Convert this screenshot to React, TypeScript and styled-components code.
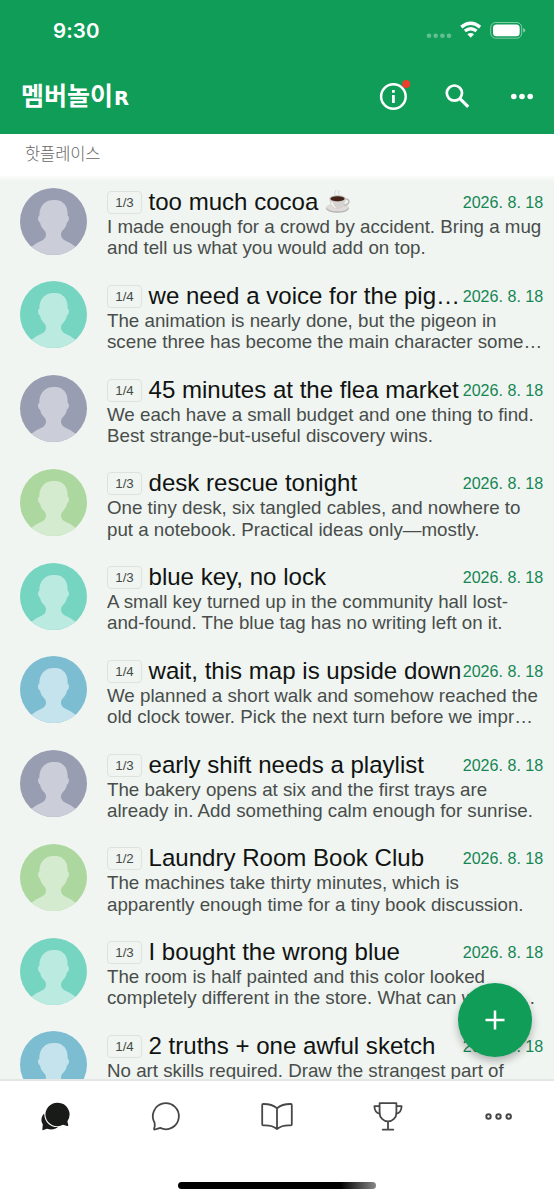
import React from "react";
import styled, { createGlobalStyle } from "styled-components";

const GlobalStyle = createGlobalStyle`
  * { box-sizing: border-box; }
  body { margin: 0; background: #fff; font-family: "Liberation Sans", "Noto Sans CJK KR", sans-serif; }
`;

const Screen = styled.div`
  position: relative;
  display: flex;
  flex-direction: column;
  width: 554px;
  height: 1200px;
  overflow: hidden;
  background: #fff;
`;

const Header = styled.header`
  flex: none;
  height: 134px;
  background: #109d58;
  color: #fff;
`;

const StatusBar = styled.div`
  display: flex;
  align-items: center;
  justify-content: space-between;
  height: 60px;
  padding: 0 28px 0 53px;
`;

const Clock = styled.span`
  padding-top: 1.5px;
  font: 600 20.5px/24px Inter, sans-serif;
  letter-spacing: 0.1px;
`;

const StatusIcons = styled.div`
  display: flex;
  align-items: center;
`;

const TitleBar = styled.div`
  display: flex;
  align-items: center;
  justify-content: space-between;
  height: 74px;
  padding: 0 20px 0 21px;
`;

const PageTitle = styled.h1`
  display: flex;
  align-items: baseline;
  margin: 0;
  padding-bottom: 6px;
  font: 700 25px/36px "Noto Sans CJK KR", sans-serif;
  letter-spacing: 0;
  white-space: nowrap;
`;

const TitleSuffix = styled.span`
  margin-left: 1px;
  font: 700 19.5px/20px "DejaVu Sans", sans-serif;
`;

const Actions = styled.div`
  display: flex;
  align-items: center;
`;

const SectionLabel = styled.div`
  flex: none;
  height: 42px;
  padding-left: 25px;
  font: 300 16.5px/39px "Noto Sans CJK KR", sans-serif;
  color: #666;
  letter-spacing: -0.1px;
`;

const List = styled.main`
  flex: 1;
  min-height: 0;
  overflow: hidden;
  padding-top: 11.5px;
  background: linear-gradient(#fbfcfb, #f0f5f2 5px);
`;

const Row = styled.article`
  display: flex;
  height: 93.75px;
  padding-left: 20px;
`;

const Avatar = styled.svg`
  flex: none;
  width: 67px;
  height: 67px;
  margin-right: 20px;
`;

const RowBody = styled.div`
  width: 437px;
  padding-top: 2.5px;
`;

const RowHead = styled.div`
  display: flex;
  align-items: center;
  height: 25px;
`;

const Count = styled.span`
  flex: none;
  width: 35px;
  height: 23px;
  margin-right: 6.5px;
  border: 1px solid #dce2de;
  border-radius: 4px;
  font-size: 13.3px;
  line-height: 22px;
  text-align: center;
  color: #444a46;
`;

const Title = styled.h2`
  display: flex;
  align-items: center;
  flex: 1;
  min-width: 0;
  margin: 0;
  padding-bottom: 2px;
  font-size: 24.07px;
  font-weight: 400;
  line-height: 25px;
  white-space: nowrap;
  color: #101311;
`;

const DateText = styled.time`
  flex: none;
  width: 81.3px;
  font-size: 16.1px;
  line-height: 25px;
  white-space: nowrap;
  color: #168653;
`;

const Message = styled.p`
  margin: 0;
  padding-top: 1px;
  font-size: 18.74px;
  line-height: 21.4px;
  white-space: pre;
  color: #484d4a;
`;

const NavBar = styled.nav`
  flex: none;
  display: grid;
  grid-template-columns: repeat(5, 1fr);
  align-items: start;
  justify-items: center;
  height: 121px;
  padding-top: 20px;
  border-top: 2px solid #e3e7e5;
  background: #fff;
`;

const AddButton = styled.button`
  position: absolute;
  left: 458px;
  top: 983px;
  display: flex;
  align-items: center;
  justify-content: center;
  width: 74px;
  height: 74px;
  padding: 0;
  border: 0;
  border-radius: 50%;
  background: #109d58;
  box-shadow: 0 4px 9px rgba(0, 0, 0, 0.28);
`;

const HomeIndicator = styled.div`
  position: absolute;
  left: 178px;
  top: 1182px;
  width: 198px;
  height: 7px;
  border-radius: 4px;
  background: linear-gradient(90deg, #000 82%, #888);
`;

const CupIcon = styled.svg`
  flex: none;
  width: 26px;
  height: 26px;
  margin-left: 7px;
`;

const palettes = {
  slate: ["#999db2", "#cbcdd9"],
  mint: ["#75d5c0", "#baeae0"],
  lime: ["#acd8a0", "#d5ebcf"],
  sky: ["#7dbdd2", "#c5e3ec"],
};

type Post = {
  tone: keyof typeof palettes;
  count: string;
  title: string;
  cup?: boolean;
  message: string;
};

const posts: Post[] = [
  { tone: "slate", count: "1/3", title: "too much cocoa", cup: true, message: "I made enough for a crowd by accident. Bring a mug\nand tell us what you would add on top." },
  { tone: "mint", count: "1/4", title: "we need a voice for the pig…", message: "The animation is nearly done, but the pigeon in\nscene three has become the main character some…" },
  { tone: "slate", count: "1/4", title: "45 minutes at the flea market", message: "We each have a small budget and one thing to find.\nBest strange-but-useful discovery wins." },
  { tone: "lime", count: "1/3", title: "desk rescue tonight", message: "One tiny desk, six tangled cables, and nowhere to\nput a notebook. Practical ideas only—mostly." },
  { tone: "mint", count: "1/3", title: "blue key, no lock", message: "A small key turned up in the community hall lost-\nand-found. The blue tag has no writing left on it." },
  { tone: "sky", count: "1/4", title: "wait, this map is upside down", message: "We planned a short walk and somehow reached the\nold clock tower. Pick the next turn before we impr…" },
  { tone: "slate", count: "1/3", title: "early shift needs a playlist", message: "The bakery opens at six and the first trays are\nalready in. Add something calm enough for sunrise." },
  { tone: "lime", count: "1/2", title: "Laundry Room Book Club", message: "The machines take thirty minutes, which is\napparently enough time for a tiny book discussion." },
  { tone: "mint", count: "1/3", title: "I bought the wrong blue", message: "The room is half painted and this color looked\ncompletely different in the store. What can we ma…" },
  { tone: "sky", count: "1/4", title: "2 truths + one awful sketch", message: "No art skills required. Draw the strangest part of" },
];

function Person({ tone, id }: { tone: Post["tone"]; id: string }) {
  const [back, front] = palettes[tone];
  return (
    <Avatar viewBox="0 0 67 67">
      <clipPath id={id}><circle cx="33.5" cy="33.5" r="33.5" /></clipPath>
      <circle cx="33.5" cy="33.5" r="33.5" fill={back} />
      <path clipPath={`url(#${id})`} fill={front} d="M33.500 12.100C25 12.100 19.200 18 19.300 28C17.300 28.400 17.700 33.500 20 34.400C20.800 38.500 22.500 40.500 25 43.200C26 44.500 26.300 47 25.600 48.800C24.500 51.500 22.500 52.300 19.500 53.700C15.500 55.500 13.500 57 11 59.500V67H56V59.500C53.500 57 51.500 55.500 47.500 53.700C44.500 52.300 42.500 51.500 41.400 48.800C40.700 47 41 44.500 42 43.200C44.500 40.500 46.200 38.500 47 34.400C49.300 33.500 49.700 28.400 47.700 28C47.700 20.500 46 16.500 42.300 14.200C40.500 12.400 37.500 12.100 33.500 12.100Z" />
    </Avatar>
  );
}

function Cup() {
  return (
    <CupIcon viewBox="0 0 26 26">
      <path d="M10.500 5.500c-3-2.500 2-2.500 0-4.500M14 5.500c-2-2 2-2.500-1-4" fill="none" stroke="#cfd3d0" strokeWidth="1" />
      <ellipse cx="12.500" cy="19.300" rx="11.500" ry="4.500" fill="#b5b1ae" />
      <ellipse cx="12.500" cy="18.300" rx="11.200" ry="4" fill="#dedbd8" />
      <path d="M19.500 10.500c5.500-1.800 6.500 5-1 6" fill="none" stroke="#c3bfbc" strokeWidth="1.700" />
      <path d="M4.500 9.500c0 6 3 10.500 8 10.500s8-4.500 8-10.500Z" fill="#d6d2cf" />
      <path d="M5.500 12.500c1 4 3 6.500 6 7-2-2-3-4-3.500-6Z" fill="#f3f1ef" />
      <ellipse cx="12.500" cy="9.500" rx="8" ry="3.200" fill="#bdb7b3" />
      <ellipse cx="12.500" cy="9.700" rx="7" ry="2.500" fill="#422117" />
    </CupIcon>
  );
}

const line = { fill: "none", stroke: "#464846", strokeWidth: 1.8, strokeLinejoin: "round", strokeLinecap: "round" } as const;

export default function App() {
  return (
    <>
      <GlobalStyle />
      <Screen>
        <Header>
          <StatusBar>
            <Clock>9:30</Clock>
            <StatusIcons>
              <svg width="100" height="24" viewBox="0 0 100 24">
                <g fill="#fff" fillOpacity=".35">
                  {[3, 9.7, 16.4, 23].map((x) => <circle key={x} cx={x} cy="17.700" r="2.300" />)}
                </g>
                <g fill="none" stroke="#fff" strokeWidth="3.400">
                  <path d="M35.300 9.100Q44.700 1.300 54.100 9.100" />
                  <path d="M38.900 13Q44.700 8.300 50.500 13" />
                </g>
                <path d="M41.400 16.300Q44.700 13.500 48 16.300L44.700 19.800Z" fill="#fff" />
                <rect x="64.700" y="4.500" width="31" height="15.700" rx="5" fill="none" stroke="#fff" strokeOpacity=".48" />
                <rect x="67" y="6.500" width="26.700" height="11.700" rx="3.500" fill="#fff" />
                <path d="M97.200 10v4.600q2-.7 2-2.300t-2-2.300Z" fill="#fff" fillOpacity=".5" />
              </svg>
            </StatusIcons>
          </StatusBar>
          <TitleBar>
            <PageTitle>멤버놀이<TitleSuffix>R</TitleSuffix></PageTitle>
            <Actions>
              <svg width="156" height="34" viewBox="0 0 156 34">
                <circle cx="15.400" cy="16.500" r="12.300" fill="none" stroke="#fff" strokeWidth="2.500" />
                <path d="M14 15h2.800v8H14ZM14 10h2.800v2.700H14Z" fill="#fff" />
                <circle cx="28.200" cy="4" r="4" fill="#ee3e2d" />
                <circle cx="76.400" cy="13.100" r="7.600" fill="none" stroke="#fff" strokeWidth="2.700" />
                <path d="M81.700 18.400L90.200 26.900" stroke="#fff" strokeWidth="3.200" />
                <g fill="#fff"><circle cx="135.800" cy="16.500" r="2.800" /><circle cx="144" cy="16.500" r="2.800" /><circle cx="152.200" cy="16.500" r="2.800" /></g>
              </svg>
            </Actions>
          </TitleBar>
        </Header>
        <SectionLabel>핫플레이스</SectionLabel>
        <List>
          {posts.map((post, i) => (
            <Row key={post.title}>
              <Person tone={post.tone} id={`avatar-${i}`} />
              <RowBody>
                <RowHead>
                  <Count>{post.count}</Count>
                  <Title>{post.title}{post.cup && <Cup />}</Title>
                  <DateText>2026. 8. 18</DateText>
                </RowHead>
                <Message>{post.message}</Message>
              </RowBody>
            </Row>
          ))}
        </List>
        <NavBar>
          <svg width="32" height="32" viewBox="-.5 0 32 32" fill="#181b18">
            <path d="M4.700 12.500C1.500 15.800 1.200 20 3.300 23.300L2.800 28.700Q3 29.400 3.800 29L7.500 27.800C11.500 29.200 15.800 28.600 18.500 26.100C11 26.500 4.800 21.500 4.700 12.500Z" />
            <path d="M18.200 1.700A11.800 11.800 0 1 0 23.500 23.800L27.800 25.100Q29 25.200 28.700 24L27.900 20.200A11.800 11.800 0 0 0 18.200 1.700Z" />
          </svg>
          <svg width="32" height="32" viewBox="-.7 0 32 32" {...line}>
            <path d="M3.900 21.700A13 13 0 1 1 9.500 26.900Q7.500 27.400 4.200 28.500Q3.100 28.700 3.400 27.600Q4.500 24.700 3.900 21.700Z" />
          </svg>
          <svg width="32" height="32" viewBox="0 0 32 32" {...line}>
            <path d="M16 7.200Q11 2.900 2.200 3Q1.200 3 1.200 4V23.300Q1.200 24.400 2.300 24.400Q11 23.800 16 28Q21 23.800 29.700 24.400Q30.800 24.400 30.800 23.300V4Q30.800 3 29.800 3Q21 2.900 16 7.200ZM16 7.200V28" />
          </svg>
          <svg width="32" height="32" viewBox="0 0 32 32" {...line}>
            <path d="M7.600 2.200H24.400V12A8.400 8.400 0 0 1 7.600 12ZM7.600 5.100H2.400C2.500 9.500 4.500 12.400 8 12.800M24.400 5.100H29.600C29.500 9.500 27.500 12.400 24 12.800M16 20.700V28.700M10.700 28.700H21.300" />
          </svg>
          <svg width="32" height="32" viewBox="0 0 32 32" {...line} strokeWidth="2">
            <circle cx="5.500" cy="15.500" r="2.200" /><circle cx="15.500" cy="15.500" r="2.200" /><circle cx="25.700" cy="15.500" r="2.200" />
          </svg>
        </NavBar>
        <AddButton aria-label="Add">
          <svg width="20" height="20" viewBox="0 0 20 20"><path d="M10 .5V19.500M.5 10H19.500" stroke="#fff" strokeWidth="2.500" /></svg>
        </AddButton>
        <HomeIndicator />
      </Screen>
    </>
  );
}
